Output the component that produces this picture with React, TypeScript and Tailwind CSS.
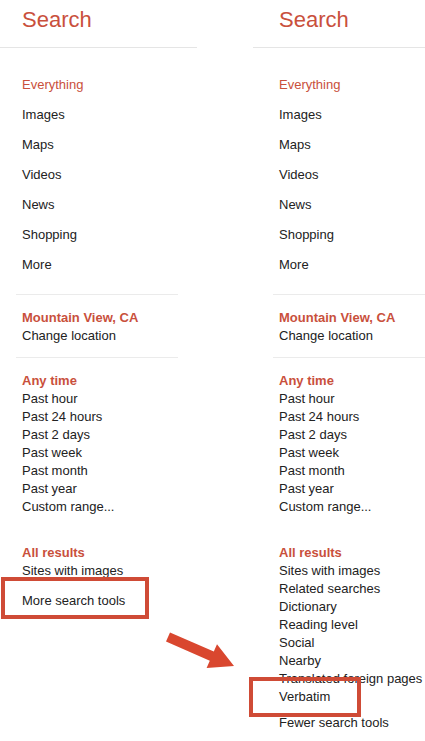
const red = "text-[#c9503c]"

const topNav = ["Everything", "Images", "Maps", "Videos", "News", "Shopping", "More"]
const times = ["Past hour", "Past 24 hours", "Past 2 days", "Past week", "Past month", "Past year", "Custom range..."]

function Column({ tools, footer, footerGap }: { tools: string[]; footer: string; footerGap: string }) {
  return (
    <div className="w-[257px] shrink-0">
      <div className={`pl-[22px] pt-[6px] text-[22px] leading-[28px] ${red}`}>Search</div>
      <div className="mt-[13px] -ml-[4px] h-px w-[201px] bg-[#e5e5e5]" />

      <ul className="pt-[22px] pl-[22px] text-[13px]">
        {topNav.map((item, i) => (
          <li key={item} className={`h-[30px] leading-[30px] ${i === 0 ? red : "text-[#222]"}`}>
            {item}
          </li>
        ))}
      </ul>

      <div className="mt-[14px] ml-[16px] h-px w-[162px] bg-[#ebebeb]" />
      <div className="pt-[14px] pl-[22px] text-[13px] leading-[18px]">
        <div className={`font-bold ${red}`}>Mountain View, CA</div>
        <div className="text-[#222]">Change location</div>
      </div>

      <div className="mt-[12px] ml-[16px] h-px w-[162px] bg-[#ebebeb]" />
      <div className="pt-[14px] pl-[22px] text-[13px] leading-[18px]">
        <div className={`font-bold ${red}`}>Any time</div>
        {times.map((t) => (
          <div key={t} className="text-[#222]">{t}</div>
        ))}
      </div>

      <div className="pt-[28px] pl-[22px] text-[13px] leading-[18px]">
        <div className={`font-bold ${red}`}>All results</div>
        {tools.map((t) => (
          <div key={t} className="text-[#222]">{t}</div>
        ))}
        <div className={`${footerGap} text-[#222]`}>{footer}</div>
      </div>
    </div>
  )
}

export default function App() {
  return (
    <div
      className="relative h-[741px] w-[425px] overflow-hidden bg-white"
      style={{ fontFamily: '"Liberation Sans", Arial, sans-serif' }}
    >
      <div className="flex">
        <Column tools={["Sites with images"]} footer="More search tools" footerGap="mt-[12px]" />
        <Column
          tools={[
            "Sites with images",
            "Related searches",
            "Dictionary",
            "Reading level",
            "Social",
            "Nearby",
            "Translated foreign pages",
            "Verbatim",
          ]}
          footer="Fewer search tools"
          footerGap="mt-[8px]"
        />
      </div>

      {/* annotation boxes */}
      <div className="absolute left-[1px] top-[577px] h-[42px] w-[148px] border-4 border-[#cf4b36]" />
      <div className="absolute left-[249px] top-[677px] h-[40px] w-[112px] border-4 border-[#cf4b36]" />

      {/* annotation arrow */}
      <svg className="absolute left-0 top-0" width="425" height="741" viewBox="0 0 425 741">
        <polygon
          points="170,632.4 213.8,651.6 217,644.3 234,666 206.6,668.1 209.8,660.8 166,641.6"
          fill="#d9472f"
        />
      </svg>
    </div>
  )
}
